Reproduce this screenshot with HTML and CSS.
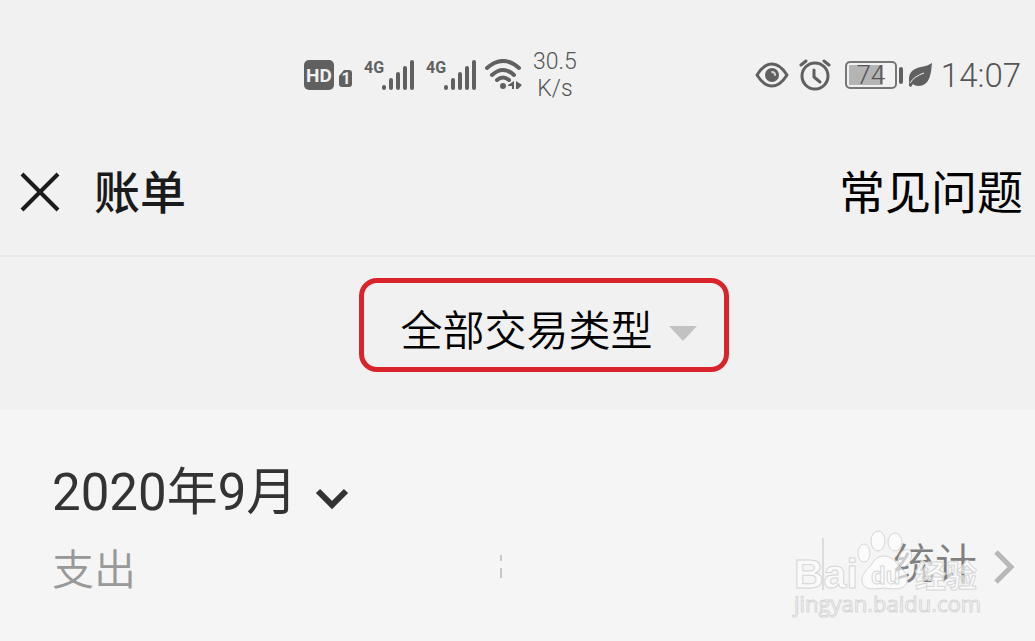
FILE: index.html
```html
<!DOCTYPE html>
<html lang="zh-CN">

<head>
    <meta charset="UTF-8">
    <title>账单</title>
    <link rel="stylesheet" href="styles.css">
</head>

<body>
    <div class="status">
        <div class="status-left">
            <svg class="hd" width="48" height="30" viewBox="0 0 48 30">
                <rect width="30" height="30" rx="5" fill="#606060"/>
                <text class="hd-text" x="15" y="22" text-anchor="middle">HD</text>
                <path d="M40 10h5a3 3 0 0 1 3 3v11a3 3 0 0 1-3 3h-7a3 3 0 0 1-3-3v-8z" fill="#606060"/>
                <text class="sim-text" x="42" y="24" text-anchor="middle">1</text>
            </svg>
            <svg class="signal" width="50" height="34" viewBox="0 0 50 34">
                <text class="net-text" x="0" y="15">4G</text>
                <path d="M20 29v1M27 22v8M34 16v14M41 10v20M48 4v26" stroke="#606060" stroke-width="4" stroke-linecap="round"/>
            </svg>
            <svg class="signal" width="50" height="34" viewBox="0 0 50 34">
                <text class="net-text" x="0" y="15">4G</text>
                <path d="M20 29v1M27 22v8M34 16v14M41 10v20M48 4v26" stroke="#606060" stroke-width="4" stroke-linecap="round"/>
            </svg>
            <svg class="wifi" width="38" height="32" viewBox="0 0 38 32">
                <path d="M2 9Q18 -5 34 9M7 16Q18 6 29 16M12 21Q18 16 24 21" fill="none" stroke="#606060" stroke-width="4" stroke-linecap="round"/>
                <circle cx="18" cy="27" r="3" fill="#606060"/>
                <path d="M29 22v8h-2v-3h-4v-1zM31 22l6 4-4 4h-2z" fill="#606060"/>
            </svg>
            <div class="speed">30.5<br>K/s</div>
        </div>
        <div class="status-right">
            <svg class="eye" width="34" height="28" viewBox="0 0 34 28">
                <path d="M2 14C7 6 12 3 17 3S27 6 32 14C27 22 22 25 17 25S7 22 2 14z" fill="none" stroke="#606060" stroke-width="3" stroke-linejoin="round"/>
                <circle cx="17" cy="14" r="7" fill="#606060"/>
                <path d="M17 11a3 3 0 0 1 3 3" fill="none" stroke="#d0d0d0" stroke-width="2" stroke-linecap="round"/>
            </svg>
            <svg class="alarm" width="32" height="32" viewBox="0 0 32 32">
                <circle cx="16" cy="17" r="13" fill="none" stroke="#606060" stroke-width="3"/>
                <path d="M15 11v7l6 5" fill="none" stroke="#606060" stroke-width="3" stroke-linecap="round" stroke-linejoin="round"/>
                <path d="M2 6l5-4M30 6l-5-4" stroke="#606060" stroke-width="3" stroke-linecap="round"/>
            </svg>
            <div class="battery">74</div>
            <span class="battery-tip"></span>
            <svg class="leaf" width="24" height="26" viewBox="0 0 24 26">
                <path d="M23 1C22 12 21 23 10 24C7 24 5 23 4 22L2 25L0 24C0 20 0 20 0 17C0 9 6 6 12 5C17 4 20 3 23 1z" fill="#606060"/>
                <path d="M1 21C4 16 9 13 15 11" fill="none" stroke="#f1f1f1" stroke-width="1"/>
            </svg>
            <time class="clock">14:07</time>
        </div>
    </div>

    <header class="nav">
        <button class="close" type="button" aria-label="关闭">
            <svg width="40" height="40" viewBox="0 0 40 40">
                <path d="M2 2l36 36M38 2L2 38" stroke="#1a1a1a" stroke-width="4"/>
            </svg>
        </button>
        <h1 class="title">账单</h1>
        <a class="help" href="#">常见问题</a>
    </header>

    <div class="filter">
        <div class="filter-box">
            <select class="filter-select" aria-label="交易类型">
                <option>全部交易类型</option>
            </select>
            <span class="triangle"></span>
        </div>
    </div>

    <main class="summary">
        <div class="month">
            <select class="month-select" aria-label="月份">
                <option>2020年9月</option>
            </select>
            <svg width="34" height="24" viewBox="0 0 34 24">
                <path d="M3 4l14 14L31 4" fill="none" stroke="#333" stroke-width="6"/>
            </svg>
        </div>
        <div class="totals">
            <span class="expense">支出</span>
            <svg class="mark" width="4" height="26" viewBox="0 0 4 26">
                <path d="M1 1v6M1 14v10" stroke="#999" stroke-width="1"/>
            </svg>
            <a class="stats" href="#">
                <span class="stats-text">统计</span>
                <svg width="22" height="36" viewBox="0 0 22 36">
                    <path d="M3 3l15 15L3 33" fill="none" stroke="#b8b8b8" stroke-width="5"/>
                </svg>
            </a>
            <svg class="watermark" width="192" height="94" viewBox="0 0 192 94">
                <path d="M34 10v52" stroke="#ddd" stroke-width="2"/>
                <g class="wm-shape">
                    <ellipse cx="75" cy="25" rx="6" ry="9"/>
                    <ellipse cx="89" cy="13" rx="7" ry="10"/>
                    <ellipse cx="106" cy="14" rx="7" ry="9"/>
                    <ellipse cx="116" cy="30" rx="6" ry="9" transform="rotate(25 116 30)"/>
                    <path d="M95 28C102 28 106 33 110 38C116 44 119 47 118 53C117 61 109 62 95 60C81 62 74 61 73 53C72 46 78 42 82 37C86 31 89 28 95 28z"/>
                </g>
                <text class="wm-logo" x="5" y="60">Bai</text>
                <text class="wm-du" x="82" y="56">du</text>
                <text class="wm-cn" x="126" y="59">经验</text>
                <text class="wm-url" x="5" y="84">jingyan.baidu.com</text>
            </svg>
        </div>
    </main>
</body>

</html>
```
FILE: styles.css
```css
html,
body {
    height: 100%;
    margin: 0;
    padding: 0;
}

body {
    display: flex;
    flex-direction: column;
    background: #f1f1f1;
    font-family: Roboto, "Noto Sans CJK SC", sans-serif;
    color: #000;
}

svg {
    display: block;
    flex: none;
}

button,
select {
    margin: 0;
    padding: 0;
    border: 0;
    background: none;
    font: inherit;
    color: inherit;
    appearance: none;
}

a {
    color: inherit;
    text-decoration: none;
}

.status {
    display: flex;
    justify-content: space-between;
    padding: 48px 14px 26px 304px;
    color: #555;
}

.status-left,
.status-right {
    display: flex;
    align-items: center;
}

.signal {
    margin-left: 12px;
}

.wifi {
    margin-left: 9px;
}

.speed {
    margin-left: 10px;
    font-size: 23px;
    font-weight: 350;
    line-height: 27px;
    text-align: center;
}

.hd-text {
    font: bold 19px Roboto, sans-serif;
    fill: #f1f1f1;
}

.sim-text {
    font: bold 16px Roboto, sans-serif;
    fill: #f1f1f1;
}

.net-text {
    font: bold 16px Roboto, sans-serif;
    fill: #606060;
}

.alarm {
    margin: 0 14px 0 10px;
}

.battery {
    width: 48px;
    height: 24px;
    border: 2px solid #777;
    border-radius: 5px;
    background: linear-gradient(90deg, #b4b4b4 74%, #f1f1f1 74%);
    box-shadow: inset 0 0 0 2px #f1f1f1;
    font-size: 26px;
    font-weight: 350;
    line-height: 24px;
    text-align: center;
}

.battery-tip {
    width: 4px;
    height: 17px;
    margin: 0 6px 0 2px;
    border-radius: 2px;
    background: #606060;
}

.clock {
    margin-left: 8px;
    font-size: 33px;
    font-weight: 350;
}

.nav {
    display: flex;
    align-items: center;
    height: 127px;
    padding: 0 12px 0 20px;
    border-bottom: 2px solid #e8e8e8;
}

.title,
.help {
    padding-bottom: 6px;
    font-size: 46px;
}

.title {
    flex: 1;
    margin: 0 0 0 34px;
    font-weight: 500;
    color: #1a1a1a;
}

.help {
    font-weight: 400;
}

.filter {
    display: flex;
    justify-content: center;
    padding: 21px 0 38px 52px;
}

.filter-box {
    display: flex;
    align-items: center;
    gap: 15px;
    height: 72px;
    padding: 12px 27px 0 37px;
    border: 5px solid #d9242c;
    border-radius: 18px;
}

.filter-select {
    font-size: 42px;
    font-weight: 350;
}

.triangle {
    margin-top: 4px;
    border: 14px solid transparent;
    border-top: 15px solid #c2c2c2;
    border-bottom: 0;
}

.summary {
    flex: 1;
    padding: 53px 20px 0 52px;
    background: #f5f5f5;
}

.month {
    display: flex;
    align-items: center;
    gap: 17px;
    color: #333;
}

.month-select {
    font-size: 51px;
}

.month svg {
    margin-top: 12px;
}

.totals {
    position: relative;
    display: flex;
    align-items: center;
    justify-content: space-between;
    margin-top: 8px;
    font-size: 42px;
    font-weight: 350;
    color: #999;
}

.mark {
    margin-right: 26px;
}

.stats {
    display: flex;
    align-items: center;
    gap: 16px;
    color: #808080;
}

.stats-text {
    padding-bottom: 12px;
}

.watermark {
    position: absolute;
    right: 34px;
    top: -2px;
    pointer-events: none;
}

.wm-shape,
.watermark text {
    fill: #fff;
    fill-opacity: .6;
    stroke: #d6d6d6;
    stroke-width: 1px;
}

.wm-logo {
    font: bold 41px "Liberation Sans", sans-serif;
}

.wm-du {
    font: bold 24px "Liberation Sans", sans-serif;
}

.wm-cn {
    font: bold 31px "Noto Sans CJK SC", sans-serif;
}

.wm-url {
    font: 22px "Open Sans", sans-serif;
}
```
